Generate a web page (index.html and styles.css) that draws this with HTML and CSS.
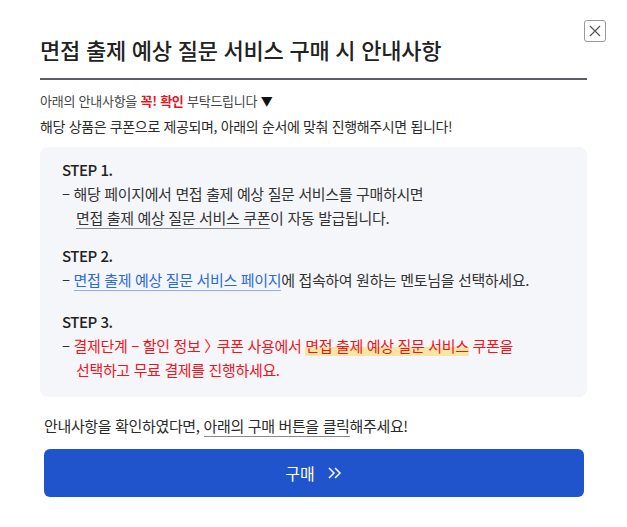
FILE: index.html
```html
<!DOCTYPE html>
<html lang="ko">
  <head>
    <meta charset="UTF-8" />
    <meta name="viewport" content="width=device-width, initial-scale=1.0" />
    <title>구매 안내사항</title>
    <link rel="stylesheet" href="styles.css">
  </head>
  <body>
    <div class="modal">
      <button class="cerrar" aria-label="닫기">
        <svg width="12" height="12" viewBox="0 0 12 12"><path d="M1 1 L11 11 M11 1 L1 11" stroke="#555" stroke-width="1.2" fill="none"/></svg>
      </button>

      <h1 class="titulo">면접 출제 예상 질문 서비스 구매 시 안내사항</h1>

      <p class="aviso">아래의 안내사항을 <b class="rojo">꼭! 확인</b> 부탁드립니다 <span class="flecha">▼</span></p>
      <p class="intro">해당 상품은 쿠폰으로 제공되며, 아래의 순서에 맞춰 진행해주시면 됩니다!</p>

      <div class="pasos">
        <div class="paso">
          <p class="nombre">STEP 1.</p>
          <p class="linea">– 해당 페이지에서 면접 출제 예상 질문 서비스를 구매하시면</p>
          <p class="linea sangria"><span class="subrayado">면접 출제 예상 질문 서비스 쿠폰</span>이 자동 발급됩니다.</p>
        </div>
        <div class="paso">
          <p class="nombre">STEP 2.</p>
          <p class="linea">– <a class="enlace" href="#">면접 출제 예상 질문 서비스 페이지</a>에 접속하여 원하는 멘토님을 선택하세요.</p>
        </div>
        <div class="paso paso3">
          <p class="nombre">STEP 3.</p>
          <p class="linea">– <span class="rojo2">결제단계 – 할인 정보 <span class="angulo">〉</span> 쿠폰 사용에서 <span class="resaltado">면접 출제 예상 질문 서비스</span> 쿠폰을</span></p>
          <p class="linea sangria rojo2">선택하고 무료 결제를 진행하세요.</p>
        </div>
      </div>

      <div class="final">
        <p class="confirma">안내사항을 확인하였다면, <span class="subrayado">아래의 구매 버튼을 클릭</span>해주세요!</p>
        <button class="comprar">
          구매
          <svg width="16" height="14" viewBox="0 0 16 14"><path d="M2 2 L7 7 L2 12 M8 2 L13 7 L8 12" stroke="#fff" stroke-width="1.5" fill="none"/></svg>
        </button>
      </div>
    </div>
  </body>
</html>
```

FILE: styles.css
```css
body{
    margin: 0;
    font-family: "Noto Sans CJK KR", "Noto Sans", sans-serif;
    color: #2b2b2b;
    background: #fff;
}
p{
    margin: 0;
}
.modal{
    position: relative;
    padding: 34px 40px 0 40px;
}
.cerrar{
    position: absolute;
    top: 20px;
    right: 21px;
    width: 22px;
    height: 22px;
    padding: 0;
    border: 1px solid #9a9a9a;
    border-radius: 3px;
    background: #fff;
    display: flex;
    align-items: center;
    justify-content: center;
    cursor: pointer;
}
.titulo{
    margin: 0;
    font-size: 22px;
    font-weight: 500;
    letter-spacing: -0.25px;
    line-height: 30px;
    color: #222;
    padding-bottom: 14px;
    border-bottom: 2px solid #5b5b63;
}
.aviso{
    margin-top: 10px;
    font-size: 13px;
    letter-spacing: -0.25px;
    line-height: 22px;
    color: #444;
}
.rojo{
    color: #e3151f;
    font-weight: 700;
}
.flecha{
    font-size: 12px;
    color: #111;
}
.intro{
    margin-top: 2px;
    font-size: 14px;
    letter-spacing: -0.35px;
    line-height: 24px;
    color: #2b2b2b;
}
.pasos{
    margin-top: 9px;
    background: #f5f6fa;
    border-radius: 8px;
    padding: 11px 22px 15px 22px;
}
.paso + .paso{
    margin-top: 14px;
}
.paso3{
    margin-top: 18px !important;
}
.nombre{
    font-size: 15px;
    font-weight: 500;
    line-height: 24px;
    letter-spacing: -0.5px;
    color: #222;
}
.linea{
    font-size: 15px;
    line-height: 24px;
    letter-spacing: -0.35px;
    color: #333;
}
.sangria{
    padding-left: 14px;
}
.subrayado{
    border-bottom: 1px solid #8a8a8a;
}
.enlace{
    color: #2a6ae0;
    text-decoration: none;
    border-bottom: 1px solid #8db0f3;
}
.rojo2{
    color: #f3131b;
}
.angulo{
    letter-spacing: -0.42em;
}
.resaltado{
    background: linear-gradient(transparent 58%, #f8e6a4 58%);
}
.final{
    padding: 0 3px 0 4px;
    margin-top: 17px;
}
.confirma{
    font-size: 15px;
    line-height: 24px;
    letter-spacing: -0.35px;
    color: #2b2b2b;
}
.comprar{
    margin-top: 11px;
    width: 100%;
    height: 48px;
    border: none;
    border-radius: 6px;
    background: #1f54cc;
    color: #fff;
    font-family: "Noto Sans CJK KR", sans-serif;
    font-size: 16px;
    display: flex;
    align-items: center;
    justify-content: center;
    gap: 12px;
    cursor: pointer;
}
```
